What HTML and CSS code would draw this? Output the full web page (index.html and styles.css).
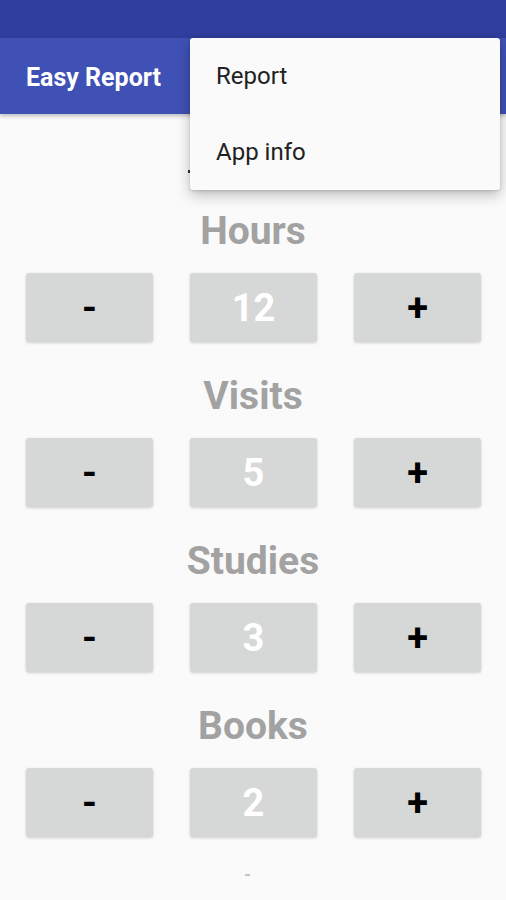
FILE: index.html
```html
<!DOCTYPE html>
<html lang="en">
<head>
    <meta charset="UTF-8">
    <meta name="viewport" content="width=device-width, initial-scale=1.0">
    <title>Easy Report</title>
    <link rel="stylesheet" href="styles.css">
</head>
<body>
    <div class="status"></div>

    <div class="toolbar">
        <h1 class="title">Easy Report</h1>
    </div>

    <!-- Menu overflow -->
    <div class="menu">
        <div class="menu-item">Report</div>
        <div class="menu-item">App info</div>
    </div>

    <div class="content">
        <div class="header"><span class="dot"></span></div>

        <div class="section">
            <div class="label">Hours</div>
            <div class="row">
                <button class="btn">-</button>
                <div class="btn value">12</div>
                <button class="btn">+</button>
            </div>
        </div>

        <div class="section">
            <div class="label">Visits</div>
            <div class="row">
                <button class="btn">-</button>
                <div class="btn value">5</div>
                <button class="btn">+</button>
            </div>
        </div>

        <div class="section">
            <div class="label">Studies</div>
            <div class="row">
                <button class="btn">-</button>
                <div class="btn value">3</div>
                <button class="btn">+</button>
            </div>
        </div>

        <div class="section">
            <div class="label">Books</div>
            <div class="row">
                <button class="btn">-</button>
                <div class="btn value">2</div>
                <button class="btn">+</button>
            </div>
        </div>

        <div class="footer"><span class="bar"></span></div>
    </div>
</body>
</html>
```

FILE: styles.css
```css
* {
    margin: 0;
    padding: 0;
    box-sizing: border-box;
}

body {
    font-family: Roboto, "Liberation Sans", sans-serif;
    background-color: #fafafa;
    width: 506px;
    height: 900px;
    overflow: hidden;
    position: relative;
}

.status {
    height: 38px;
    background-color: #303f9f;
}

.toolbar {
    height: 76px;
    background-color: #3f51b5;
    display: flex;
    align-items: center;
    padding-left: 26px;
    box-shadow: 0 2px 4px rgba(0, 0, 0, 0.25);
    position: relative;
    z-index: 1;
}

.title {
    color: #ffffff;
    font-size: 25px;
    font-weight: 700;
    padding-top: 2px;
}

.menu {
    position: absolute;
    top: 38px;
    left: 190px;
    width: 310px;
    background-color: #fafafa;
    border-radius: 3px;
    box-shadow: 0 5px 14px rgba(0, 0, 0, 0.25), 0 1px 3px rgba(0, 0, 0, 0.15);
    z-index: 5;
}

.menu-item {
    height: 76px;
    display: flex;
    align-items: center;
    padding-left: 26px;
    font-size: 24px;
    color: #212121;
}

.header {
    height: 93px;
    padding-top: 56px;
    padding-left: 188px;
}

.dot {
    display: block;
    width: 3px;
    height: 3px;
    background-color: #333;
}

.section {
    margin-bottom: 30px;
}

.label {
    height: 48px;
    line-height: 48px;
    text-align: center;
    font-size: 39px;
    font-weight: 700;
    color: #a2a2a2;
}

.row {
    margin-top: 18px;
    display: flex;
    justify-content: space-between;
    padding: 0 25px 0 26px;
}

.btn {
    width: 127px;
    height: 69px;
    border: none;
    border-radius: 3px;
    background-color: #d6d7d7;
    box-shadow: 0 1px 3px rgba(0, 0, 0, 0.18);
    font-family: Roboto, "Liberation Sans", sans-serif;
    font-size: 38px;
    font-weight: 700;
    color: #000000;
    display: flex;
    align-items: center;
    justify-content: center;
}

.value {
    color: #ffffff;
}

.footer {
    display: flex;
    justify-content: center;
    padding-top: 7px;
    padding-right: 12px;
}

.bar {
    width: 5px;
    height: 2px;
    background-color: #c4c4c4;
}
```
